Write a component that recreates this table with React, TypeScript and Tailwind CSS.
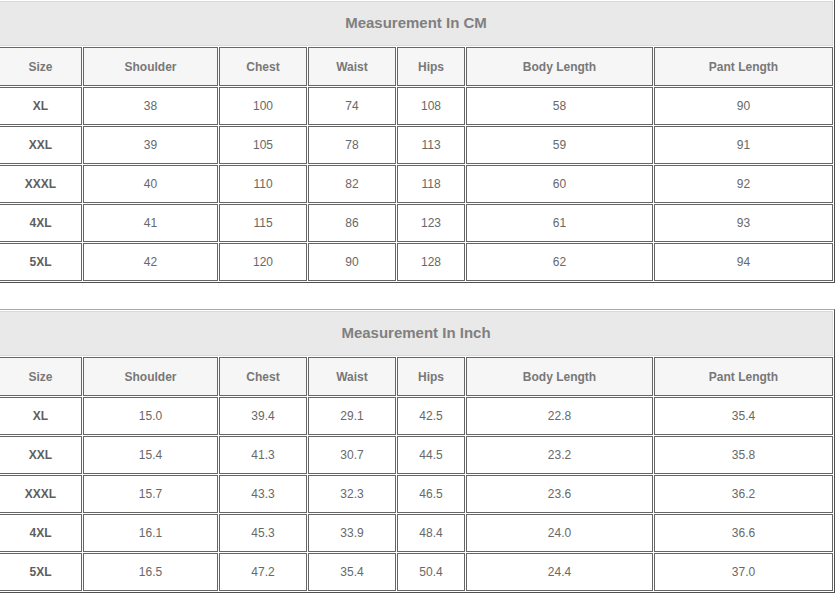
import React from "react";

type Row = [string, string, string, string, string, string, string];

const headers = ["Size", "Shoulder", "Chest", "Waist", "Hips", "Body Length", "Pant Length"];

const cmRows: Row[] = [
  ["XL", "38", "100", "74", "108", "58", "90"],
  ["XXL", "39", "105", "78", "113", "59", "91"],
  ["XXXL", "40", "110", "82", "118", "60", "92"],
  ["4XL", "41", "115", "86", "123", "61", "93"],
  ["5XL", "42", "120", "90", "128", "62", "94"],
];

const inchRows: Row[] = [
  ["XL", "15.0", "39.4", "29.1", "42.5", "22.8", "35.4"],
  ["XXL", "15.4", "41.3", "30.7", "44.5", "23.2", "35.8"],
  ["XXXL", "15.7", "43.3", "32.3", "46.5", "23.6", "36.2"],
  ["4XL", "16.1", "45.3", "33.9", "48.4", "24.0", "36.6"],
  ["5XL", "16.5", "47.2", "35.4", "50.4", "24.4", "37.0"],
];

function SizeTable({ title, rows }: { title: string; rows: Row[] }) {
  return (
    <div className="ml-[-3px] w-[838px] border border-t-[#a8a8a8] border-l-[#a8a8a8] border-r-[#4f4f4f] border-b-[#4f4f4f] bg-white p-[1px]">
      <div className="grid grid-cols-[83px_135px_88px_88px_68px_187px_179px] gap-[1px]">
        <div className="col-span-7 flex h-[45px] items-center justify-center border border-[#dadada] bg-[#e9e9e9] text-[15px] font-bold text-[#808080]">
          {title}
        </div>
        {headers.map((h) => (
          <div
            key={h}
            className="flex h-[39px] items-center justify-center border border-[#666666] bg-[#f6f6f6] text-[12px] font-bold text-[#787878]"
          >
            {h}
          </div>
        ))}
        {rows.map((r) =>
          r.map((v, i) => (
            <div
              key={r[0] + "-" + i}
              className={
                i === 0
                  ? "flex h-[38px] items-center justify-center border border-[#666666] bg-white text-[12px] font-bold text-[#5e5e5e]"
                  : "flex h-[38px] items-center justify-center border border-[#666666] bg-white text-[12px] text-[#686868]"
              }
            >
              {v}
            </div>
          ))
        )}
      </div>
    </div>
  );
}

export default function App() {
  return (
    <div
      className="h-[593px] w-[836px] overflow-hidden bg-white"
      style={{ fontFamily: '"Liberation Sans", Arial, sans-serif' }}
    >
      <div className="mt-[-1px]">
        <SizeTable title="Measurement In CM" rows={cmRows} />
        <div className="mt-[26px]">
          <SizeTable title="Measurement In Inch" rows={inchRows} />
        </div>
      </div>
    </div>
  );
}
